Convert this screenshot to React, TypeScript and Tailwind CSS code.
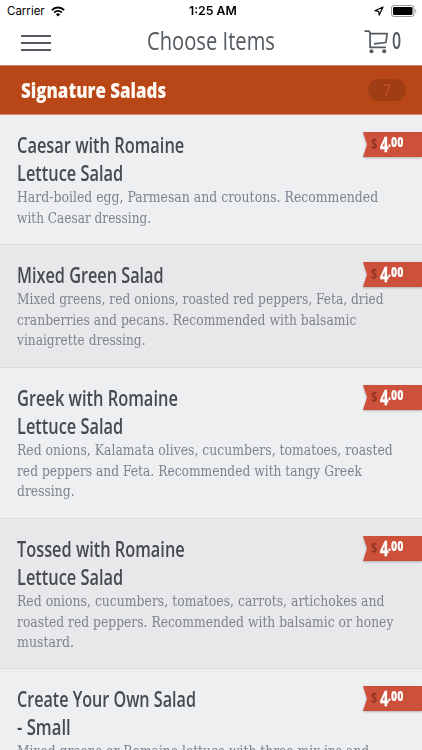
import { useLayoutEffect, useRef, useState } from "react";
import clsx from "clsx";

type Line = [text: string, width: number];

interface Item {
  title: Line[];
  description: Line[];
  className: string;
}

const items: Item[] = [
  {
    title: [
      ["Caesar with Romaine", 167],
      ["Lettuce Salad", 106],
    ],
    description: [
      ["Hard-boiled egg, Parmesan and croutons. Recommended", 361],
      ["with Caesar dressing.", 134],
    ],
    className: "h-[130px]",
  },
  {
    title: [["Mixed Green Salad", 147]],
    description: [
      ["Mixed greens, red onions, roasted red peppers, Feta, dried", 367],
      ["cranberries and pecans. Recommended with balsamic", 339],
      ["vinaigrette dressing.", 129],
    ],
    className: "h-[123px]",
  },
  {
    title: [
      ["Greek with Romaine", 161],
      ["Lettuce Salad", 106],
    ],
    description: [
      ["Red onions, Kalamata olives, cucumbers, tomatoes, roasted", 376],
      ["red peppers and Feta. Recommended with tangy Greek", 345],
      ["dressing.", 58],
    ],
    className: "h-[151px]",
  },
  {
    title: [
      ["Tossed with Romaine", 168],
      ["Lettuce Salad", 106],
    ],
    description: [
      ["Red onions, cucumbers, tomatoes, carrots, artichokes and", 367],
      ["roasted red peppers. Recommended with balsamic or honey", 376],
      ["mustard.", 57],
    ],
    className: "h-[150px]",
  },
  {
    title: [
      ["Create Your Own Salad", 179],
      ["- Small", 54],
    ],
    description: [["Mixed greens or Romaine lettuce with three mix ins and", 352]],
    className: "h-[151px]",
  },
];

// Condenses a single line of text to the given width
const FitText = ({ text, width, className }: { text: string; width: number; className?: string }) => {
  const ref = useRef<HTMLSpanElement>(null);
  const [scale, setScale] = useState(1);

  useLayoutEffect(() => {
    if (!ref.current) return;
    setScale(width / ref.current.offsetWidth);
  }, [text, width]);

  return (
    <span className="block" style={{ width }}>
      <span
        ref={ref}
        className={clsx("inline-block origin-left whitespace-nowrap align-top", className)}
        style={{ transform: `scaleX(${scale})` }}
      >
        {text}
      </span>
    </span>
  );
};

const StatusBar = () => (
  <div className="grid h-[22px] grid-cols-3 items-center pl-[7px] pr-[5px] text-black">
    <div className="flex items-center gap-[6px] pt-px font-['Inter',sans-serif] text-[11.5px]">
      <FitText text="Carrier" width={38} />
      <svg width="14" height="11" viewBox="0 0 14 11" fill="none" stroke="currentColor">
        <path d="M.9 4.1a8.7 8.7 0 0 1 12.2 0" strokeWidth="2" />
        <path d="M3.2 6.5a5.4 5.4 0 0 1 7.6 0" strokeWidth="1.8" />
        <path d="M4.9 8.3a3 3 0 0 1 4.2 0L7 10.4z" fill="currentColor" stroke="none" />
      </svg>
    </div>
    <div className="flex justify-center pl-[2px] font-['Inter',sans-serif] text-[12px] font-semibold">
      <FitText text="1:25 AM" width={48} />
    </div>
    <div className="flex items-center justify-end gap-[7px]">
      <svg width="10" height="10" viewBox="0 0 10 10" fill="none" stroke="currentColor" strokeWidth="1.2" strokeLinejoin="round">
        <path d="M9 1 .9 4.7l3.8.6.5 3.8z" />
      </svg>
      <svg width="26" height="12" viewBox="0 0 26 12">
        <rect x=".5" y=".5" width="22.5" height="11" rx="2.5" fill="none" stroke="#999" />
        <rect x="2" y="2" width="19.5" height="8" rx="1.2" />
        <path d="M24.3 4v4c1.4-.5 1.4-3.5 0-4z" fill="#999" />
      </svg>
    </div>
  </div>
);

const CartIcon = () => (
  <svg width="25" height="24" viewBox="0 0 25 24" fill="none" stroke="currentColor" strokeWidth="1.7" strokeLinejoin="round">
    <path d="M.5 1.2H5l1.1 1.6v14.6h15.8" />
    <path d="M6.1 3.6h17l-1.2 8.9-11.9 1.4" />
    <circle cx="7.5" cy="21.3" r="2" fill="currentColor" stroke="none" />
    <circle cx="20.2" cy="21.3" r="2" fill="currentColor" stroke="none" />
  </svg>
);

const Header = () => (
  <header className="flex h-[43px] items-start justify-between pl-[21px] pr-[21px] text-[#525960]">
    <button className="mt-[13px] flex w-[30px] flex-col gap-[5px]" aria-label="Menu">
      <span className="h-[2px] w-full bg-current" />
      <span className="h-[2px] w-full bg-current" />
      <span className="h-[2px] w-full bg-current" />
    </button>
    <h1 className="-ml-px font-['Open_Sans',sans-serif] text-[26px] leading-[36px]">
      <FitText text="Choose Items" width={128} />
    </h1>
    <div className="-ml-2 flex gap-[3px]">
      <div className="mt-[8px]">
        <CartIcon />
      </div>
      <span className="font-['Open_Sans',sans-serif] text-[23px] font-semibold leading-[37px]">
        <FitText text="0" width={9} />
      </span>
    </div>
  </header>
);

const PriceTag = () => (
  <div className="absolute right-0 top-[17px] drop-shadow-[0_1px_1px_rgba(0,0,0,0.25)]">
    <div className="flex h-[25px] w-[59px] items-start bg-[#cc503a] pl-[7.5px] font-['Open_Sans',sans-serif] font-bold text-white [clip-path:polygon(0_0,100%_0,100%_100%,0_100%,4px_50%)]">
      <span className="mr-[2.5px] text-[13.5px] font-semibold leading-[25px] text-[#8a3020]">
        <FitText text="$" width={6.5} />
      </span>
      <span className="text-[21px] leading-[25px]">
        <FitText text="4" width={8.5} className="[-webkit-text-stroke:0.3px]" />
      </span>
      <span className="text-[14px] font-extrabold leading-[20px]">
        <FitText text=".00" width={15} />
      </span>
    </div>
  </div>
);

const App = () => {
  return (
    <main className="h-[750px] w-[422px] overflow-hidden bg-white">
      <StatusBar />
      <Header />
      <section>
        <div className="flex h-[50px] items-center justify-between border-y border-y-[#cf8a6c] bg-[#b94616] pl-[20.5px] pr-[16px]">
          <h2 className="font-['Open_Sans',sans-serif] text-[21px] font-extrabold leading-[28px] text-[#fff9f3]">
            <FitText text="Signature Salads" width={145} />
          </h2>
          <span className="flex h-[22px] w-[38px] items-center justify-center rounded-full bg-[#9f3d15] font-['Open_Sans',sans-serif] text-[16px] font-bold text-[#b94b20]">
            <FitText text="7" width={8} />
          </span>
        </div>
        <ul>
          {items.map((item, idx) => (
            <li
              key={idx}
              className={clsx(
                "relative border-b border-[#dcdde0] pl-[16.5px] pt-[16px]",
                idx % 2 ? "bg-[#e8e8ea]" : "bg-[#eeeff1]",
                item.className,
              )}
            >
              <h3 className="font-['Open_Sans',sans-serif] text-[21px] font-semibold leading-[28px] text-[#454b52]">
                {item.title.map(([text, width]) => (
                  <FitText key={text} text={text} width={width} />
                ))}
              </h3>
              <p className="font-['DejaVu_Serif',serif] text-[14.3px] leading-[20.7px] text-[#7c8490]">
                {item.description.map(([text, width]) => (
                  <FitText key={text} text={text} width={width} />
                ))}
              </p>
              <PriceTag />
            </li>
          ))}
        </ul>
      </section>
    </main>
  );
};

export default App;
